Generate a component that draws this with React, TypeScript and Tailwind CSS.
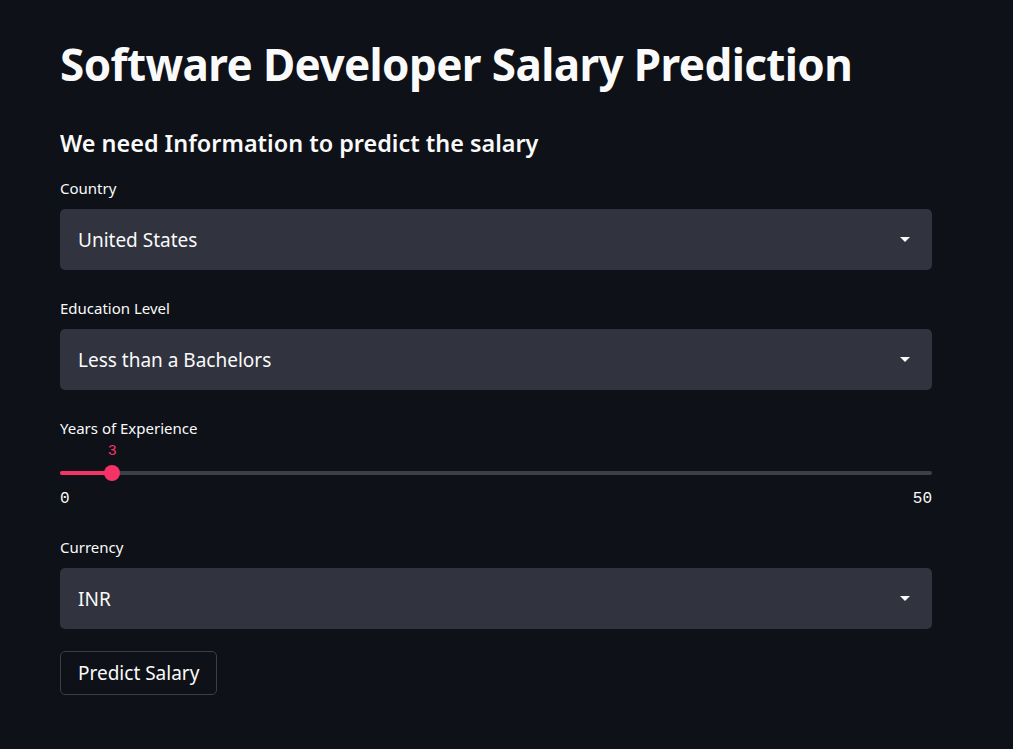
import { useState } from "react";

const SelectBox = ({ label, value }: { label: string; value: string }) => {
  return (
    <div className="flex flex-col">
      <p className="text-[15px] text-[#fafafa] h-[21px] leading-[21px] mb-[10px] font-['Noto_Sans',sans-serif]">
        {label}
      </p>
      <div className="h-[61px] rounded-[5px] bg-[#31333f] flex items-center justify-between pl-[18px] pr-[22px]">
        <span className="text-[19px] text-[#fafafa] font-['Noto_Sans',sans-serif] mt-[2px]">{value}</span>
        <svg width="10" height="5" viewBox="0 0 10 5">
          <path d="M0 0 L10 0 L5 5 Z" fill="#fafafa" />
        </svg>
      </div>
    </div>
  );
};

const App = () => {
  const [years] = useState(3);
  const pct = (years / 50) * 100;
  return (
    <div className="min-h-[749px] bg-[#0e1117] text-[#fafafa]">
      <div className="w-[872px] ml-[60px] pt-[36px] flex flex-col">
        <h1 className="text-[44px] leading-[56px] font-bold tracking-[-0.6px] font-['Noto_Sans',sans-serif]">
          Software Developer Salary Prediction
        </h1>
        <h3 className="mt-[35px] text-[23.4px] leading-[32px] font-semibold font-['Noto_Sans',sans-serif]">
          We need Information to predict the salary
        </h3>
        <div className="mt-[19px] flex flex-col gap-[28px]">
          <SelectBox label="Country" value="United States" />
          <SelectBox label="Education Level" value="Less than a Bachelors" />
        </div>

        <div className="mt-[28px] flex flex-col">
          <p className="text-[15px] text-[#fafafa] h-[21px] leading-[21px] font-['Noto_Sans',sans-serif]">
            Years of Experience
          </p>
          <div className="relative h-[71px]">
            <div className="absolute left-0 right-0 top-[32px] h-[4px] rounded-full bg-[#3d3f4a]" />
            <div
              className="absolute left-0 top-[32px] h-[4px] rounded-full bg-[#f63366]"
              style={{ width: `${pct}%` }}
            />
            <div
              className="absolute top-[26px] w-[16px] h-[16px] -ml-[8px] rounded-full bg-[#f63366]"
              style={{ left: `${pct}%` }}
            />
            <span
              className="absolute top-[3px] leading-[20px] -translate-x-1/2 text-[15px] text-[#f63366] font-['Liberation_Mono',monospace]"
              style={{ left: `${pct}%` }}
            >
              {years}
            </span>
            <span className="absolute left-0 top-[50px] leading-[20px] text-[16px] font-['Liberation_Mono',monospace]">0</span>
            <span className="absolute right-0 top-[50px] leading-[20px] text-[16px] font-['Liberation_Mono',monospace]">50</span>
          </div>
        </div>

        <div className="mt-[27px]">
          <SelectBox label="Currency" value="INR" />
        </div>

        <div className="mt-[22px]">
          <button className="h-[44px] px-[17px] rounded-[5px] border border-[#3b3e48] bg-[#0e1117] text-[19px] text-[#fafafa] font-['Noto_Sans',sans-serif]">
            Predict Salary
          </button>
        </div>
      </div>
    </div>
  );
};

export default App;
